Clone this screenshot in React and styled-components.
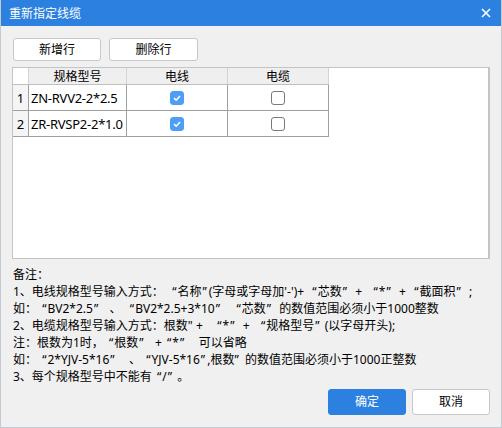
import React from 'react';
import styled, { createGlobalStyle } from 'styled-components';

const Global = createGlobalStyle`
  html, body { margin: 0; padding: 0; }
  body {
    font-family: "Noto Sans", "Noto Sans CJK SC", sans-serif;
    font-size: 12px;
    color: #000;
    background: #f0f0f0;
  }
`;

const Dialog = styled.div`
  width: 502px;
  height: 428px;
  box-sizing: border-box;
  background: #f0f0f0;
  border: 1px solid #c3cad6;
  border-top: none;
  display: flex;
  flex-direction: column;
  overflow: hidden;
`;

const TitleBar = styled.div`
  flex: none;
  height: 26px;
  margin: 0 -1px;
  background: #2c80df;
  color: #fff;
  display: flex;
  align-items: center;
  justify-content: space-between;
  padding: 0 9px;
  font-size: 12px;
`;

const Close = styled.span`
  display: flex;
  width: 10px;
  height: 10px;
  margin-right: 2px;
`;

const Body = styled.div`
  flex: 1;
  display: flex;
  flex-direction: column;
  padding: 12px 11px 12px 11px;
`;

const Toolbar = styled.div`
  display: flex;
  gap: 8px;
  padding-left: 1px;
`;

const Btn = styled.button`
  width: ${p => p.w || 88}px;
  height: ${p => p.h || 23}px;
  box-sizing: border-box;
  border: 1px solid ${p => (p.primary ? '#2c80df' : '#c8c8c8')};
  border-radius: 3px;
  background: ${p => (p.primary ? '#2c80df' : '#fff')};
  color: ${p => (p.primary ? '#fff' : '#000')};
  font-family: inherit;
  font-size: 12px;
  padding: 0;
  line-height: 1;
`;

const Grid = styled.div`
  margin-top: 6px;
  height: 192px;
  box-sizing: border-box;
  background: #fff;
  border: 1px solid #c4c4c4;
  border-right-width: 2px;
  overflow: hidden;
`;

const Table = styled.table`
  border-collapse: collapse;
  table-layout: fixed;
  width: 316px;
  margin: -1px 0 0 -1px;
`;

const Head = styled.th`
  height: 16px;
  padding: 0;
  font-weight: normal;
  font-size: 12px;
  background: ${p => (p.corner ? '#fff' : '#efefef')};
  border: 1px solid #d4d4d4;
  border-bottom-color: #c0c0c0;
  line-height: 15px;
`;

const Cell = styled.td`
  height: 25px;
  padding: 0 ${p => (p.num ? 0 : 2)}px;
  border: 1px solid #a0a0a0;
  border-left-color: ${p => (p.num ? '#d4d4d4' : '#a0a0a0')};
  text-align: ${p => (p.num ? 'center' : 'left')};
  background: ${p => (p.num ? '#f5f5f5' : '#fff')};
  font-size: 13px;
  letter-spacing: ${p => (p.num ? 0 : -0.25)}px;
  white-space: nowrap;
  overflow: hidden;
`;

const Center = styled.div`
  display: flex;
  justify-content: center;
  align-items: center;
`;

const Box = styled.span`
  width: 14px;
  height: 14px;
  box-sizing: border-box;
  border-radius: 3px;
  border: 1px solid ${p => (p.on ? '#4d9ef4' : '#7a7a7a')};
  background: ${p => (p.on ? '#4d9ef4' : '#fff')};
  display: flex;
  align-items: center;
  justify-content: center;
  margin-top: 1px;
`;

const Notes = styled.div`
  margin-top: 7px;
  padding-left: 1px;
  line-height: 17px;
  font-size: 12px;
  white-space: nowrap;
`;

const Mark = styled.span`
  padding: ${p => (p.open ? '0 1px 0 2px' : '0 2px 0 1px')};
`;

const Footer = styled.div`
  margin-top: auto;
  display: flex;
  justify-content: flex-end;
  gap: 6px;
`;

const Q = ({ children }) => (
  <>
    <Mark open>“</Mark>{children}<Mark>”</Mark>
  </>
);

const sp = n => '\u00a0'.repeat(n);

const Check = ({ on }) => (
  <Box on={on}>
    {on && (
      <svg width="10" height="10" viewBox="0 0 10 10">
        <path d="M2 5.2 L4.2 7.2 L8 3" fill="none" stroke="#fff" strokeWidth="1.6" />
      </svg>
    )}
  </Box>
);

const rows = [
  { id: 1, name: 'ZN-RVV2-2*2.5', wire: true, cable: false },
  { id: 2, name: 'ZR-RVSP2-2*1.0', wire: true, cable: false },
];

export default function App() {
  return (
    <Dialog>
      <Global />
      <TitleBar>
        重新指定线缆
        <Close>
          <svg width="10" height="10" viewBox="0 0 10 10">
            <path d="M1 1 L9 9 M9 1 L1 9" stroke="#fff" strokeWidth="1.6" />
          </svg>
        </Close>
      </TitleBar>
      <Body>
        <Toolbar>
          <Btn w={88}>新增行</Btn>
          <Btn w={89}>删除行</Btn>
        </Toolbar>
        <Grid>
          <Table>
            <colgroup>
              <col style={{ width: 16 }} />
              <col style={{ width: 98 }} />
              <col style={{ width: 101 }} />
              <col style={{ width: 101 }} />
            </colgroup>
            <thead>
              <tr>
                <Head corner />
                <Head>规格型号</Head>
                <Head>电线</Head>
                <Head>电缆</Head>
              </tr>
            </thead>
            <tbody>
              {rows.map(r => (
                <tr key={r.id}>
                  <Cell num>{r.id}</Cell>
                  <Cell>{r.name}</Cell>
                  <Cell><Center><Check on={r.wire} /></Center></Cell>
                  <Cell><Center><Check on={r.cable} /></Center></Cell>
                </tr>
              ))}
            </tbody>
          </Table>
        </Grid>
        <Notes>
          <div>备注：</div>
          <div>
            1、电线规格型号输入方式：{sp(2)}<Q>名称</Q>(字母或字母加'-')+{sp(2)}<Q>芯数</Q>{sp(2)}+{sp(3)}<Q>*</Q>{sp(2)}+{sp(2)}<Q>截面积</Q>{sp(2)};
          </div>
          <div>
            如：{sp(1)}<Q>BV2*2.5</Q>{sp(3)}、{sp(2)}<Q>BV2*2.5+3*10</Q>{sp(4)}<Q>芯数</Q>{sp(2)}的数值范围必须小于1000整数
          </div>
          <div>
            2、电缆规格型号输入方式：根数"{sp(1)}+{sp(4)}<Q>*</Q>{sp(2)}+{sp(3)}<Q>规格型号</Q>{sp(1)}(以字母开头);
          </div>
          <div>
            注：根数为1时，{sp(1)}<Q>根数</Q>{sp(3)}+{sp(1)}<Q>*</Q>{sp(4)}可以省略
          </div>
          <div>
            如：{sp(1)}<Q>2*YJV-5*16</Q>{sp(4)}、{sp(1)}<Q>YJV-5*16</Q>,根数”{sp(2)}的数值范围必须小于1000正整数
          </div>
          <div>
            3、每个规格型号中不能有{sp(1)}<Q>/</Q>{sp(1)}。
          </div>
        </Notes>
        <Footer>
          <Btn primary w={78} h={26}>确定</Btn>
          <Btn w={78} h={26}>取消</Btn>
        </Footer>
      </Body>
    </Dialog>
  );
}
